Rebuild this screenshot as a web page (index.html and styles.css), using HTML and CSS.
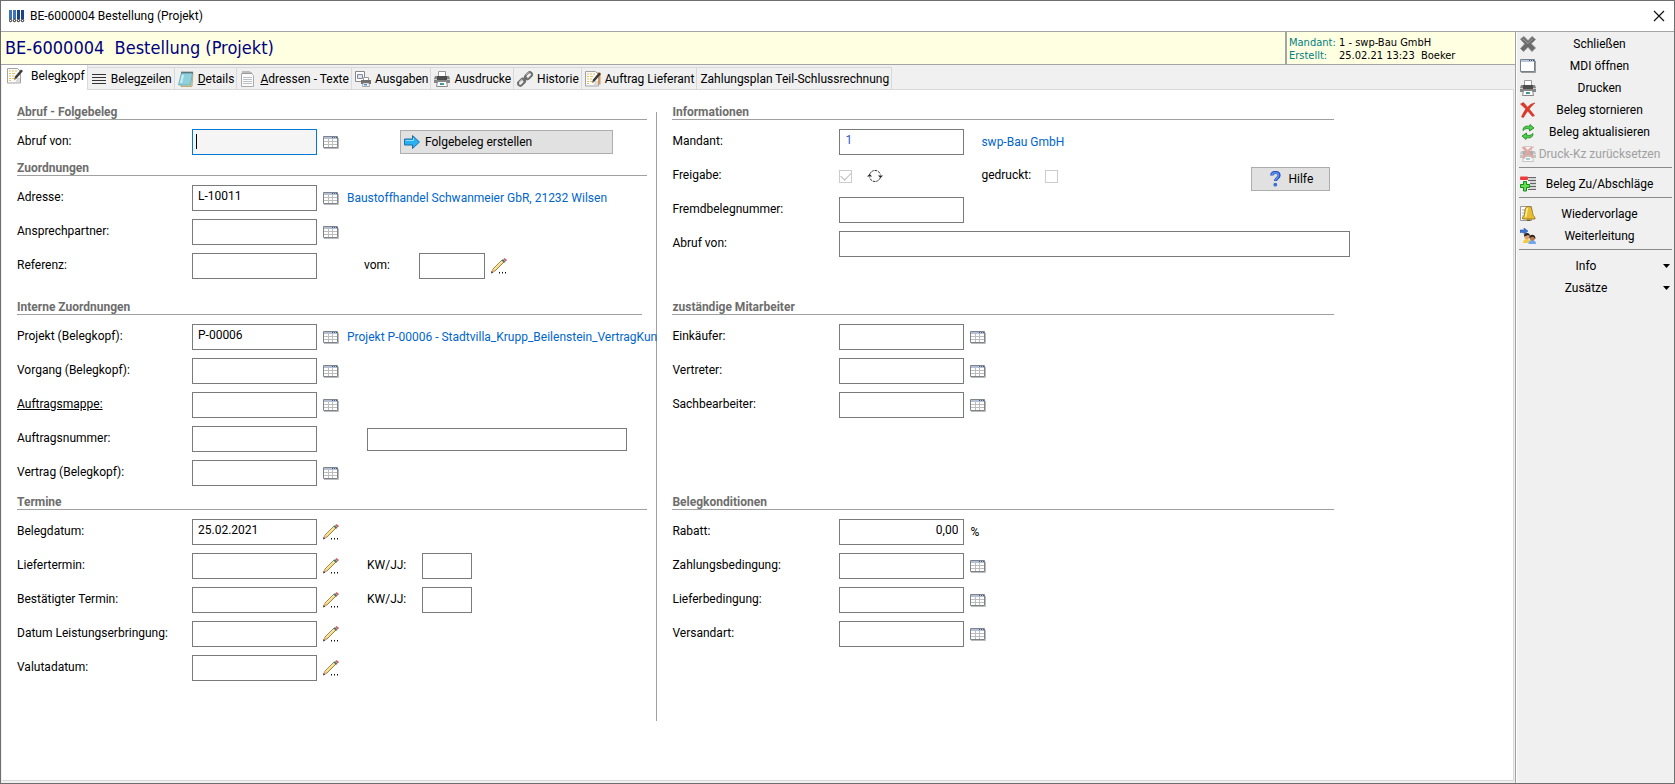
FILE: index.html
```html
<!DOCTYPE html>
<html lang="de">
<head>
<meta charset="utf-8">
<title>BE-6000004 Bestellung (Projekt)</title>
<link rel="stylesheet" href="styles.css">
</head>
<body>
<svg class="sprite" aria-hidden="true">
  <symbol id="i-table" viewBox="0 0 16 13">
    <path d="M1 12.500h14.500V2" fill="none" stroke="#bbb"/>
    <path d="M.5.500h14v11H.5z" fill="#fff" stroke="#7d848c"/>
    <path d="M1 1h13v2H1z" fill="#b4c0d2"/>
    <path d="M9 1h1v1H9zM11 1h1v1h-1zM13 1h1v1h-1z" fill="#445a80"/>
    <path d="M1 5.500h13M1 8.500h13M5.500 3v8M9.500 3v8" stroke="#bcbcbc"/>
  </symbol>
  <symbol id="i-pencil" viewBox="0 0 16 16">
    <path d="M.5 14.500l1.500-3.500L11 2l2 2L4 13z" fill="#f7d982" stroke="#8b6a33" stroke-width=".8"/>
    <path d="M2.500 11.500L11.500 2.700" stroke="#fff3b0"/>
    <path d="M.5 14.500l1.300-3.500 2.200 2.200z" fill="#e9b48c"/><path d="M0 15.500l.8-2.500 1.500 1.500z" fill="#333"/>
    <path d="M10.500 2.500l1.500-1.500 2.500 2.500-1.500 1.500z" fill="#52786c"/>
    <path d="M12.500 1l1-1L16 2l-1.200 1.400z" fill="#cc5560"/>
    <path d="M8 14h1v1.500H8zM11 14h1v1.500h-1zM14 14h1v1.500h-1z" fill="#111"/>
  </symbol>
  <symbol id="i-edit" viewBox="0 0 16 16">
    <path d="M.5.500h10l3 3v11.500H.5z" fill="#fafafa" stroke="#a3a3a3"/>
    <path d="M2 3h2M5 3h2M8 3h2M2 5.500h2M5 5.500h3M2 8h2M5 8h2M2 10.500h2M5 10.500h3M2 12.500h2" stroke="#e3c35c" stroke-width="1.200"/>
    <path d="M9 13h4M10 11h3" stroke="#bbb"/>
    <path d="M7 12l1-3.500L14 1.500 16 3 9.500 10.500z" fill="#3b3b3b"/><path d="M7 12.500l.8-2.500 1.400 1.200z" fill="#d9b37a"/>
  </symbol>
  <symbol id="i-lines" viewBox="0 0 16 16"><path d="M1 3.500h14M1 6.500h14M1 9.500h14M1 12.500h14" stroke="#333"/></symbol>
  <symbol id="i-note" viewBox="0 0 16 16">
    <path d="M4 1.500h11l-1 14H3z" fill="#e4d59a" stroke="#a8955a" stroke-width=".7"/>
    <path d="M3.500 1.500h11L12.500 14H.5z" fill="#8fd0dd" stroke="#5aa5b5" stroke-width=".7"/>
    <path d="M5 4L3 12" stroke="#c9eef4" stroke-width="2"/>
    <path d="M4 .5v2M6 .5v2M8 .5v2M10 .5v2M12 .5v2M14 .5v2" stroke="#444"/>
  </symbol>
  <symbol id="i-page" viewBox="0 0 16 16">
    <path d="M1.500 2.500h10l2 2v11h-12z" fill="#fcfcfc" stroke="#aaa"/>
    <path d="M3 6.500h9M3 8.500h9M3 10.500h9M3 12.500h9" stroke="#b9c0c8"/>
    <path d="M3 0v3M5 0v3M7 0v3M9 0v3M11 1v2" stroke="#888"/>
  </symbol>
  <symbol id="i-printer" viewBox="0 0 16 16">
    <path d="M4.500 5V.500h7V5" fill="#fff" stroke="#999"/>
    <path d="M1 5h14l1 3v4H0V8z" fill="#858585"/><path d="M3 5h10v4H3z" fill="#4d4d4d"/>
    <path d="M0 8.500h3M13 8.500h3" stroke="#ccc"/>
    <path d="M3.500 10.500h9l1 5h-11z" fill="#fff" stroke="#888"/>
    <path d="M6 12h2v2H6z" fill="#3d87c8"/><path d="M8 12h2v2H8z" fill="#49a774"/>
  </symbol>
  <symbol id="i-output" viewBox="0 0 16 16">
    <path d="M.5.500h9v10h-9z" fill="#fff" stroke="#888"/><path d="M2.500 3.500h5v4h-5z" fill="#dce6ef" stroke="#889"/>
    <path d="M8.500 9V6.500h5V9" fill="#fff" stroke="#999"/><path d="M6 9h10v4H6z" fill="#6f6f6f"/>
    <path d="M8 12h6l.5 3.500h-7z" fill="#fff" stroke="#888" stroke-width=".7"/><path d="M9 13h3v1.500H9z" fill="#4a90d9"/>
  </symbol>
  <symbol id="i-link" viewBox="0 0 16 16">
    <g fill="none" stroke="#6e6e6e" stroke-width="2"><rect x="7.500" y="2.500" width="8" height="4.500" rx="2.200" transform="rotate(-45 11.500 4.700)"/><rect x=".5" y="9" width="8" height="4.500" rx="2.200" transform="rotate(-45 4.500 11.200)"/><path d="M6 10l4-4"/></g>
    <path d="M9 4l3-3M2 11l3-3" stroke="#c9c9c9" stroke-width=".7"/>
  </symbol>
  <symbol id="i-x-gray" viewBox="0 0 16 16">
    <path d="M.5 3L4 .500l4 4.200L12 .500 15.500 3.500l-4.300 4.200L15.500 12 12 15.500 8 11.200 3.500 15.500.500 12.500l4.200-4.600z" fill="#6b6b6b" stroke="#8f8f8f"/>
    <path d="M3 3l5 4.500L12.500 3" fill="none" stroke="#a5a5a5"/>
  </symbol>
  <symbol id="i-window" viewBox="0 0 16 16"><path d="M1 14.500h14.500V3" fill="none" stroke="#999"/><path d="M.5 1.500h14v12H.5z" fill="#fff" stroke="#76808c"/><path d="M1 2h13v2H1z" fill="#bac6d6"/><path d="M9 2h1v1H9zM11 2h1v1h-1zM13 2h1v1h-1z" fill="#3d5378"/></symbol>
  <symbol id="i-x-red" viewBox="0 0 16 16"><path d="M.5 2l3-1.500 4 4.700C9.500 3 12 1.200 15 1c-2 1.500-4 3.700-5.800 6l5.300 6.500-2 1L7.700 9C6 11.500 4.500 13.700 3.500 15.500L1.500 15c1-2.500 2.500-5.500 4.300-8z" fill="#e0392a" stroke="#b82418" stroke-width=".5"/></symbol>
  <symbol id="i-refresh" viewBox="0 0 16 16">
    <g fill="#4fce4a" stroke="#16801d" stroke-width=".8"><path d="M3 6.500C3 2.500 6 1.500 9.500 2.500L10 .500 14 4 9.500 7 9.500 5C7 4.200 5 4.500 3 6.500z"/><path d="M13 9.500c0 4-3 5-6.500 4L6 15.500 2 12l4.500-3v2c2.500.800 4.500.500 6.500-1.500z"/></g>
  </symbol>
  <symbol id="i-discount" viewBox="0 0 16 16">
    <path d="M7 1.500h9M8 4.500h8M10 7.500h6M10 10.500h6M8 13.500h8" stroke="#666"/><path d="M8 3h8M10 6h6M10 9h6M10 12h6" stroke="#bbb"/>
    <rect y=".5" width="8" height="3.500" rx="1" fill="#ee3c3c"/><path d="M3.500 5.500h3v3h3v3h-3v3.500h-3v-3.500h-3v-3h3z" fill="#62df4c" stroke="#148a1b"/>
  </symbol>
  <symbol id="i-bell" viewBox="0 0 16 16">
    <path d="M.5.500h11v14H.5z" fill="#fff" stroke="#999"/><path d="M2 4h3M2 7h3M2 10h2" stroke="#aaa"/>
    <path d="M8.500.500c3 0 3.500 2.500 4 6 .3 2 1 4 2.500 5v1.500H2.500v-1.500c1.500-1 2-3 2.200-5C5 3 5.500.500 8.500.500z" fill="#e9bd32" stroke="#8c6a10" stroke-width=".8"/>
    <path d="M7.500 2c-1 2-1 6-2 9" stroke="#fff1a0" fill="none" stroke-width="1.500"/><path d="M6.500 13.500h4c0 2-4 2-4 0z" fill="#7a5a0c"/>
  </symbol>
  <symbol id="i-forward" viewBox="0 0 16 16">
    <path d="M0 2h4V0l4 3-4 3.500V4.500H0z" fill="#3f77d6" stroke="#234f9f" stroke-width=".5"/>
    <path d="M3 15c0-3 2-4 4-4s3 1 3 4z" fill="#f3ca45"/><circle cx="7" cy="8.500" r="2.800" fill="#d9a06c"/><path d="M4 8.500C4 4 10 4 10 8L8 7z" fill="#22201e"/>
    <path d="M8.500 16c0-3 1.500-4 3.500-4s4 1 4 4z" fill="#6fa8ef"/><circle cx="12.300" cy="10" r="2.700" fill="#b97a4d"/><path d="M9.300 10C9 5.500 16 5.500 15.500 11L13 8.500z" fill="#2b2320"/>
  </symbol>
  <symbol id="i-arrow" viewBox="0 0 16 16"><path d="M.5 5h8V1.500L15.500 8l-7 6.500V11h-8z" fill="#28b0f2" stroke="#1c6fa8"/><path d="M1.500 6.500h8V4" fill="none" stroke="#8fdcff"/></symbol>
  <symbol id="i-help" viewBox="0 0 16 16"><path d="M4.700 4.500C5 .5 12 .5 12 4.500c0 2.500-3.500 2.800-3.500 5.500" fill="none" stroke="#2453b8" stroke-width="3.200"/><path d="M5 4C5.500 1 11.500 1 11.500 4.500c0 2.500-3 2.800-3 5" fill="none" stroke="#5f93ee" stroke-width="1.500"/><circle cx="8.300" cy="13.700" r="1.900" fill="#3a6fd6"/></symbol>
  <symbol id="i-sync" viewBox="0 0 16 14"><path d="M2.700 5.500C3.500 3 5.500 1.500 8 1.500s4.700 1.500 5.300 4M13.300 8.500c-.8 2.500-2.800 4-5.300 4s-4.700-1.500-5.300-4" fill="none" stroke="#333" stroke-dasharray="2.500 .8"/><path d="M0 7.500L2.700 5 5 7.500zM11 6.500L13.500 9 16 6.500z" fill="#222"/></symbol>
</svg>

<div class="window">
  <header class="titlebar">
    <svg class="logo" viewBox="0 0 16 13" aria-hidden="true"><path d="M0 0h3v9H0zM4 0h3v9H4z" fill="#3e74b4"/><path d="M8 0h3v9H8zM12 0h3v9h-3z" fill="#1b4488"/><g fill="#fff" stroke="#111"><circle cx="1.500" cy="10.500" r="1.200"/><circle cx="5.500" cy="10.500" r="1.200"/><circle cx="9.500" cy="10.500" r="1.200"/><circle cx="13.500" cy="10.500" r="1.200"/></g></svg>
    <span class="title">BE-6000004 Bestellung (Projekt)</span>
    <button class="close" aria-label="Fenster schließen"><svg viewBox="0 0 12 12"><path d="M1 1l10 10M11 1L1 11" stroke="#111" stroke-width="1.200"/></svg></button>
  </header>

  <div class="body">
    <main class="main">
      <div class="banner">
        <h1>BE-6000004&nbsp; Bestellung (Projekt)</h1>
        <dl class="meta">
          <dt>Mandant:</dt><dd>1 - swp-Bau GmbH</dd>
          <dt>Erstellt:</dt><dd>25.02.21 13:23&nbsp; Boeker</dd>
        </dl>
      </div>

      <nav class="tabs">
        <button class="tab active"><svg class="ic"><use href="#i-edit"/></svg><span>Beleg<u>k</u>opf</span></button>
        <button class="tab"><svg class="ic"><use href="#i-lines"/></svg><span>Beleg<u>z</u>eilen</span></button>
        <button class="tab"><svg class="ic"><use href="#i-note"/></svg><span><u>D</u>etails</span></button>
        <button class="tab"><svg class="ic"><use href="#i-page"/></svg><span><u>A</u>dressen - Texte</span></button>
        <button class="tab"><svg class="ic"><use href="#i-output"/></svg><span>Ausgaben</span></button>
        <button class="tab"><svg class="ic"><use href="#i-printer"/></svg><span>Ausdrucke</span></button>
        <button class="tab"><svg class="ic"><use href="#i-link"/></svg><span>Historie</span></button>
        <button class="tab"><svg class="ic" viewBox="0 0 16 16"><path d="M9 1.500h6.500v12H9z" fill="#e8913a"/><use href="#i-edit" width="16" height="16"/></svg><span>Auftrag Lieferant</span></button>
        <button class="tab"><span>Zahlungsplan Teil-Schlussrechnung</span></button>
      </nav>

      <form class="form">
        <div class="cell left">
          <section>
            <h2>Abruf - Folgebeleg</h2>
            <div class="row"><label for="abruf">Abruf von:</label><span class="caret"><input id="abruf" class="field focused" type="text"></span><button type="button" class="pick" aria-label="Auswahl"><svg class="tb"><use href="#i-table"/></svg></button><button type="button" class="btn wide"><svg class="ic"><use href="#i-arrow"/></svg>Folgebeleg erstellen</button></div>
          </section>
          <section>
            <h2>Zuordnungen</h2>
            <div class="row"><label for="adr">Adresse:</label><input id="adr" class="field" type="text" value="L-10011"><button type="button" class="pick" aria-label="Auswahl"><svg class="tb"><use href="#i-table"/></svg></button><a href="#">Baustoffhandel Schwanmeier GbR, 21232 Wilsen</a></div>
            <div class="row"><label for="ansp">Ansprechpartner:</label><input id="ansp" class="field" type="text"><button type="button" class="pick" aria-label="Auswahl"><svg class="tb"><use href="#i-table"/></svg></button></div>
            <div class="row"><label for="ref">Referenz:</label><input id="ref" class="field" type="text"><span class="pick"></span><label class="sub from" for="vom">vom:</label><input id="vom" class="field date" type="text"><button type="button" class="pick" aria-label="Datum"><svg class="ic"><use href="#i-pencil"/></svg></button></div>
          </section>
        </div>
        <div class="divider"></div>
        <section class="cell right">
          <h2>Informationen</h2>
          <div class="row"><label for="mand">Mandant:</label><input id="mand" class="field blue" type="text" value="1"><span class="gap"></span><a href="#">swp-Bau GmbH</a></div>
          <div class="row"><label for="frei">Freigabe:</label><span class="checks"><input id="frei" type="checkbox" checked disabled><button type="button" class="sync" aria-label="Freigabe aktualisieren"><svg viewBox="0 0 16 14"><use href="#i-sync"/></svg></button></span><span class="gap"></span><label class="inline" for="gedr">gedruckt:</label><input id="gedr" type="checkbox" disabled><button type="button" class="btn help"><svg class="ic"><use href="#i-help"/></svg>Hilfe</button></div>
          <div class="row"><label for="fremd">Fremdbelegnummer:</label><input id="fremd" class="field" type="text"></div>
          <div class="row"><label for="abruf2">Abruf von:</label><input id="abruf2" class="field full" type="text"></div>
        </section>

        <section class="cell left internal">
          <h2>Interne Zuordnungen</h2>
          <div class="row"><label for="proj">Projekt (Belegkopf):</label><input id="proj" class="field" type="text" value="P-00006"><button type="button" class="pick" aria-label="Auswahl"><svg class="tb"><use href="#i-table"/></svg></button><a href="#">Projekt P-00006 - Stadtvilla_Krupp_Beilenstein_VertragKun</a></div>
          <div class="row"><label for="vorg">Vorgang (Belegkopf):</label><input id="vorg" class="field" type="text"><button type="button" class="pick" aria-label="Auswahl"><svg class="tb"><use href="#i-table"/></svg></button></div>
          <div class="row"><label for="mappe"><u>Auftragsmappe:</u></label><input id="mappe" class="field" type="text"><button type="button" class="pick" aria-label="Auswahl"><svg class="tb"><use href="#i-table"/></svg></button></div>
          <div class="row"><label for="anr">Auftragsnummer:</label><input id="anr" class="field" type="text"><span class="pick"></span><input class="field text" type="text" aria-label="Auftragsbezeichnung"></div>
          <div class="row"><label for="vertr">Vertrag (Belegkopf):</label><input id="vertr" class="field" type="text"><button type="button" class="pick" aria-label="Auswahl"><svg class="tb"><use href="#i-table"/></svg></button></div>
        </section>
        <section class="cell right">
          <h2>zuständige Mitarbeiter</h2>
          <div class="row"><label for="eink">Einkäufer:</label><input id="eink" class="field" type="text"><button type="button" class="pick" aria-label="Auswahl"><svg class="tb"><use href="#i-table"/></svg></button></div>
          <div class="row"><label for="vtr">Vertreter:</label><input id="vtr" class="field" type="text"><button type="button" class="pick" aria-label="Auswahl"><svg class="tb"><use href="#i-table"/></svg></button></div>
          <div class="row"><label for="sach">Sachbearbeiter:</label><input id="sach" class="field" type="text"><button type="button" class="pick" aria-label="Auswahl"><svg class="tb"><use href="#i-table"/></svg></button></div>
        </section>

        <section class="cell left">
          <h2>Termine</h2>
          <div class="row"><label for="bdat">Belegdatum:</label><input id="bdat" class="field" type="text" value="25.02.2021"><button type="button" class="pick" aria-label="Datum"><svg class="ic"><use href="#i-pencil"/></svg></button></div>
          <div class="row"><label for="lief">Liefertermin:</label><input id="lief" class="field" type="text"><button type="button" class="pick" aria-label="Datum"><svg class="ic"><use href="#i-pencil"/></svg></button><label class="sub" for="kw1">KW/JJ:</label><input id="kw1" class="field week" type="text"></div>
          <div class="row"><label for="best">Bestätigter Termin:</label><input id="best" class="field" type="text"><button type="button" class="pick" aria-label="Datum"><svg class="ic"><use href="#i-pencil"/></svg></button><label class="sub" for="kw2">KW/JJ:</label><input id="kw2" class="field week" type="text"></div>
          <div class="row"><label for="leist">Datum Leistungserbringung:</label><input id="leist" class="field" type="text"><button type="button" class="pick" aria-label="Datum"><svg class="ic"><use href="#i-pencil"/></svg></button></div>
          <div class="row"><label for="val">Valutadatum:</label><input id="val" class="field" type="text"><button type="button" class="pick" aria-label="Datum"><svg class="ic"><use href="#i-pencil"/></svg></button></div>
        </section>
        <section class="cell right">
          <h2>Belegkonditionen</h2>
          <div class="row"><label for="rab">Rabatt:</label><input id="rab" class="field num" type="text" value="0,00"><span class="unit">%</span></div>
          <div class="row"><label for="zahl">Zahlungsbedingung:</label><input id="zahl" class="field" type="text"><button type="button" class="pick" aria-label="Auswahl"><svg class="tb"><use href="#i-table"/></svg></button></div>
          <div class="row"><label for="lbed">Lieferbedingung:</label><input id="lbed" class="field" type="text"><button type="button" class="pick" aria-label="Auswahl"><svg class="tb"><use href="#i-table"/></svg></button></div>
          <div class="row"><label for="vers">Versandart:</label><input id="vers" class="field" type="text"><button type="button" class="pick" aria-label="Auswahl"><svg class="tb"><use href="#i-table"/></svg></button></div>
        </section>
      </form>
    </main>

    <aside class="sidebar">
      <button class="item"><svg class="ic"><use href="#i-x-gray"/></svg><span>Schließen</span></button>
      <button class="item"><svg class="ic"><use href="#i-window"/></svg><span>MDI öffnen</span></button>
      <button class="item"><svg class="ic"><use href="#i-printer"/></svg><span>Drucken</span></button>
      <button class="item"><svg class="ic"><use href="#i-x-red"/></svg><span>Beleg stornieren</span></button>
      <button class="item"><svg class="ic"><use href="#i-refresh"/></svg><span>Beleg aktualisieren</span></button>
      <button class="item" disabled><svg class="ic" viewBox="0 0 16 16"><use href="#i-printer" width="16" height="16"/><use href="#i-x-red" width="16" height="13"/></svg><span>Druck-Kz zurücksetzen</span></button>
      <hr>
      <button class="item"><svg class="ic"><use href="#i-discount"/></svg><span>Beleg Zu/Abschläge</span></button>
      <hr>
      <button class="item"><svg class="ic"><use href="#i-bell"/></svg><span>Wiedervorlage</span></button>
      <button class="item"><svg class="ic"><use href="#i-forward"/></svg><span>Weiterleitung</span></button>
      <hr>
      <button class="item drop"><span>Info</span><svg class="chev" viewBox="0 0 7 4"><path d="M0 0h7L3.500 4z"/></svg></button>
      <button class="item drop"><span>Zusätze</span><svg class="chev" viewBox="0 0 7 4"><path d="M0 0h7L3.500 4z"/></svg></button>
    </aside>
  </div>
</div>
</body>
</html>
```
FILE: styles.css
```css
* { box-sizing: border-box; }
body { margin: 0; font: 12px/16px Roboto, "Noto Sans", sans-serif; color: #000; background: #fff; }
button { font: inherit; color: inherit; background: none; border: 0; padding: 0; margin: 0; }
.sprite { display: none; }
.ic { width: 16px; height: 16px; flex: none; }
.tb { width: 16px; height: 13px; flex: none; }

.window { min-height: 100vh; display: flex; flex-direction: column; border: 1px solid #6e6e6e; }
.titlebar { display: flex; align-items: center; height: 31px; padding: 0 9px 0 8px; border-bottom: 1px solid #a5a5a5; }
.logo { width: 16px; height: 13px; margin-right: 5px; }
.close { margin-left: auto; width: 12px; height: 12px; }
.close svg { display: block; }

.body { flex: 1; display: flex; }
.main { flex: 1; min-width: 0; display: flex; flex-direction: column; background: #f0f0f0; border-right: 1px solid #a0a0a0; padding: 0 1px 2px 1px; }
.banner { display: flex; height: 33px; margin: 0 -1px; background: #ffffe1; border-bottom: 1px solid #a5a5a5; }
.banner h1 { flex: 1; margin: 0; padding-left: 4px; font: 18px/31px "DejaVu Sans Condensed", "DejaVu Sans", sans-serif; color: #000080; }
.meta { margin: 0; width: 230px; padding: 4px 2px; border-left: 2px solid #a5a5a5; display: grid; grid-template-columns: 50px 1fr; grid-auto-rows: 13px; align-content: start; font: 11px/13px "DejaVu Sans Condensed", "DejaVu Sans", sans-serif; }
.meta dt { color: #008080; }
.meta dd { margin: 0; white-space: nowrap; }

.tabs { display: flex; align-items: flex-end; height: 25px; border-bottom: 1px solid #d9d9d9; }
.tab { display: flex; align-items: center; gap: 4px; height: 22px; padding: 0 2px 0 3px; border: 1px solid #d9d9d9; border-width: 1px 1px 0 0; white-space: nowrap; }
.tab.active { height: 25px; padding: 0 2px 3px 5px; gap: 8px; background: #fff; border-top: 0; margin-bottom: -1px; }

.form { flex: 1; background: #fff; border: 1px solid #d9d9d9; border-width: 0 1px 1px 0; padding: 14px 0 0 15px; display: grid; grid-template-columns: minmax(0, 630fr) auto minmax(0, 677fr) minmax(0, 163fr); grid-template-rows: 194px 195px auto; align-content: start; }
.left { grid-column: 1; --label: 175px; }
.right { grid-column: 3; --label: 167px; }
.right h2 { margin-right: 16px; }
.internal h2 { margin-right: 5px; }
.divider { grid-column: 2; grid-row: 1 / 4; width: 1px; background: #a0a0a0; margin: 8px 15px 0 9px; height: 609px; }
h2 { margin: 0 0 5px; height: 16px; font-size: 12px; line-height: 16px; font-weight: 700; color: #6d6d6d; border-bottom: 1px solid #a0a0a0; }
section + section { margin-top: 1px; }
.row { display: flex; align-items: center; height: 34px; white-space: nowrap; }
.row > label:first-child { width: var(--label); flex: none; padding-bottom: 3px; }
.row > .sub { width: 55px; margin-left: 20px; padding-bottom: 3px; }
.row > .from { margin-left: 17px; }
.row a { color: #0066cc; text-decoration: none; }
.field { flex: none; width: 125px; height: 26px; padding: 0 5px 5px; border: 1px solid #7a7a7a; background: #fff; color: #000; font: inherit; outline: 0; }
.field.focused { border-color: #0078d7; background: #f5f5f5; }
.field.blue { color: #2a5bd0; }
.field.num { text-align: right; }
.field.date { width: 66px; }
.field.week { width: 50px; }
.field.text { width: 260px; height: 23px; margin-left: 20px; }
.field.full { width: auto; flex: 1; }
.caret { position: relative; display: flex; }
.caret::after { content: ""; position: absolute; left: 4px; top: 5px; width: 1px; height: 15px; background: #000; }
.pick { display: flex; align-items: center; width: 30px; padding-left: 6px; flex: none; }
.unit { padding-left: 6px; }
.gap { width: 17px; }
.btn { display: flex; align-items: center; gap: 5px; height: 24px; padding: 0 3px; background: #e1e1e1; border: 1px solid #adadad; }
.btn.wide { width: 213px; margin-left: 53px; }
.btn.help { width: 79px; margin: 0 20px 2px auto; align-self: flex-end; justify-content: center; }
.checks { display: flex; align-items: center; width: 125px; gap: 15px; }
.sync { width: 16px; height: 14px; }
.sync svg { display: block; }
.inline { width: 64px; padding-bottom: 3px; }
input[type="checkbox"] { appearance: none; width: 13px; height: 13px; margin: 0; border: 1px solid #ccc; background: #fff; display: grid; place-items: center; }
input[type="checkbox"]:checked::before { content: ""; width: 9px; height: 5px; border: solid #bbb; border-width: 0 0 1px 1px; transform: translateY(-1px) rotate(-45deg); }

.sidebar { width: 157px; flex: none; padding: 1px 2px 0 2px; margin-left: 1px; background: #f0f0f0; }
.item { display: flex; align-items: center; width: 100%; height: 22px; padding: 0 9px 0 1px; }
.item span { flex: 1; text-align: center; white-space: nowrap; }
.item:disabled { color: #a0a0a0; }
.item:disabled .ic { opacity: .4; }
.item.drop { padding: 0 2px 0 0; }
.chev { width: 7px; height: 4px; }
.item.drop span { padding-right: 10px; }
hr { border: 0; height: 1px; background: #8a8a8a; margin: 2px 0 5px; }
```
